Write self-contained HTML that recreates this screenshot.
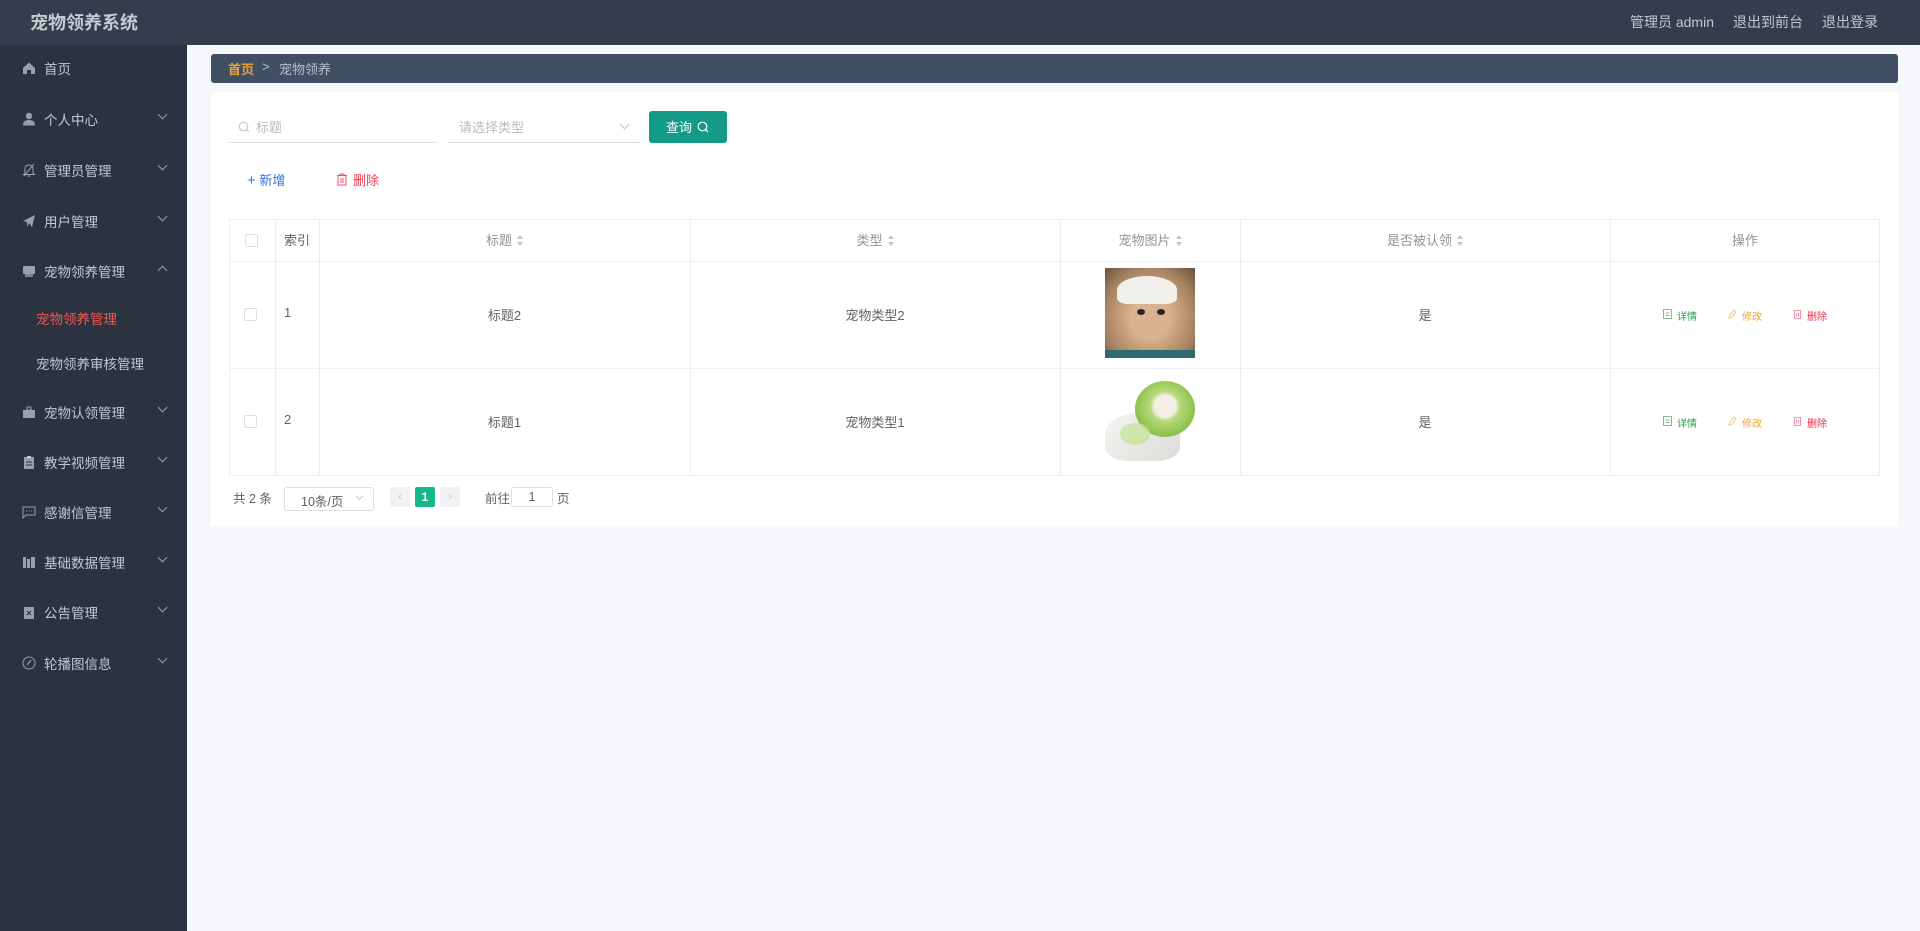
<!DOCTYPE html>
<html><head><meta charset="utf-8"><style>
*{margin:0;padding:0;box-sizing:border-box}
body{width:1920px;height:931px;background:#f5f7fa;font-family:"Liberation Sans","Noto Sans CJK SC",sans-serif;position:relative;overflow:hidden;font-size:13px;color:#606266}
.hd{position:absolute;left:0;top:0;width:1920px;height:45px;background:#343d4c}
.hd .t{position:absolute;left:30px;top:9px;font-size:18px;font-weight:bold;color:#c6cad1}
.hd .r{position:absolute;right:42px;top:12px;font-size:14px;color:#c3c8d0;word-spacing:0}
.hd .r span{margin-left:19px}
.sb{position:absolute;left:0;top:45px;width:187px;height:886px;background:#2b3341}
.it{position:absolute;left:0;width:187px;height:40px;color:#c4c8cf;font-size:13.5px}
.it .ic{position:absolute;left:22px;top:12px;width:14px;height:14px}
.it .tx{position:absolute;left:44px;top:9px}
.it .ar{position:absolute;left:159px;top:11px;width:7px;height:7px;border-right:1px solid #9aa0a8;border-bottom:1px solid #9aa0a8;transform:rotate(45deg)}
.it .ar.up{transform:rotate(-135deg);top:15px}
.sub{position:absolute;left:36px;font-size:13.5px;color:#c4c8cf}
.bc{position:absolute;left:211px;top:54px;width:1687px;height:29px;background:#414f64;border-radius:3px;font-size:13px;color:#b7bec9}
.card{position:absolute;left:211px;top:92px;width:1687px;height:434px;background:#fff}
.abs{position:absolute}
.tb{position:absolute;left:229px;top:219px;width:1651px;height:257px;border:1px solid #ebeef5}
.hl{position:absolute;left:0;width:1649px;height:1px;background:#ebeef5}
.vl{position:absolute;top:0;width:1px;height:255px;background:#ebeef5}
.th{position:absolute;top:10px;color:#909399;font-size:13px;text-align:center}
.td{position:absolute;font-size:13px;color:#606266;text-align:center}
.srt{display:inline-block;width:6px;height:12px;position:relative;top:2px;margin-left:5px}
.srt:before{content:"";position:absolute;left:0;top:0;border:3px solid transparent;border-bottom:4px solid #c0c4cc;border-top:0}
.srt:after{content:"";position:absolute;left:0;top:7px;border:3px solid transparent;border-top:4px solid #c0c4cc;border-bottom:0}
.cb{position:absolute;width:13px;height:13px;border:1px solid #dcdfe6;border-radius:2px;background:#fff}
.op{position:absolute;font-size:10px}
</style></head><body>
<div class="hd"><div class="t">宠物领养系统</div><div class="r"><span>管理员 admin</span><span>退出到前台</span><span>退出登录</span></div></div>
<div class="sb">
<div class="it" style="top:4px"><svg class="ic" viewBox="0 0 14 14"><path d="M1 7L7 1.5 13 7V13H9V9H5V13H1Z" fill="#9aa0a8"/></svg><span class="tx">首页</span></div>
<div class="it" style="top:55px"><svg class="ic" viewBox="0 0 14 14"><circle cx="7" cy="4" r="3.2" fill="#9aa0a8"/><path d="M1 13.5Q1 8 7 8 13 8 13 13.5Z" fill="#9aa0a8"/></svg><span class="tx">个人中心</span><i class="ar"></i></div>
<div class="it" style="top:106px"><svg class="ic" viewBox="0 0 14 14"><path d="M3 10V6Q3 2 7 2 11 2 11 6V10L12.5 11.5H1.5Z M5.5 13H8.5 M2 13L12 1" fill="none" stroke="#9aa0a8" stroke-width="1"/></svg><span class="tx">管理员管理</span><i class="ar"></i></div>
<div class="it" style="top:157px"><svg class="ic" viewBox="0 0 14 14"><path d="M1 7L13 1 10 13 7 9 5 13V8Z" fill="#9aa0a8"/></svg><span class="tx">用户管理</span><i class="ar"></i></div>
<div class="it" style="top:207px"><svg class="ic" viewBox="0 0 14 14"><rect x="1" y="2" width="12" height="8" rx="1" fill="#9aa0a8"/><rect x="3" y="10" width="8" height="3" fill="#7f858e"/></svg><span class="tx">宠物领养管理</span><i class="ar up"></i></div>
<div class="sub" style="top:263px;color:#f2564f">宠物领养管理</div>
<div class="sub" style="top:308px">宠物领养审核管理</div>
<div class="it" style="top:348px"><svg class="ic" viewBox="0 0 14 14"><rect x="5" y="2" width="4" height="3" fill="none" stroke="#9aa0a8"/><rect x="1" y="5" width="12" height="8" fill="#9aa0a8"/></svg><span class="tx">宠物认领管理</span><i class="ar"></i></div>
<div class="it" style="top:398px"><svg class="ic" viewBox="0 0 14 14"><rect x="2" y="2" width="10" height="12" fill="#9aa0a8"/><rect x="5" y="1" width="4" height="2" fill="#c4c8cf"/><path d="M4 7H10M4 10H10" stroke="#2b3341"/></svg><span class="tx">教学视频管理</span><i class="ar"></i></div>
<div class="it" style="top:448px"><svg class="ic" viewBox="0 0 14 14"><path d="M1 2H13V10H4L1 13Z" fill="none" stroke="#9aa0a8"/><path d="M4 6H5M6.5 6H7.5M9 6H10" stroke="#9aa0a8"/></svg><span class="tx">感谢信管理</span><i class="ar"></i></div>
<div class="it" style="top:498px"><svg class="ic" viewBox="0 0 14 14"><rect x="1" y="2" width="3" height="11" fill="#9aa0a8"/><rect x="5" y="4" width="3" height="9" fill="#9aa0a8"/><rect x="9" y="2" width="4" height="11" fill="#9aa0a8"/></svg><span class="tx">基础数据管理</span><i class="ar"></i></div>
<div class="it" style="top:548px"><svg class="ic" viewBox="0 0 14 14"><rect x="2" y="2" width="10" height="12" fill="#9aa0a8"/><path d="M5 6L9 10M9 6L5 10" stroke="#2b3341"/></svg><span class="tx">公告管理</span><i class="ar"></i></div>
<div class="it" style="top:599px"><svg class="ic" viewBox="0 0 14 14"><circle cx="7" cy="7" r="6" fill="none" stroke="#9aa0a8"/><path d="M5 9L9 4" stroke="#9aa0a8" stroke-width="1.3"/></svg><span class="tx">轮播图信息</span><i class="ar"></i></div>
</div>
<div class="bc"><span class="abs" style="left:17px;top:5px;color:#e5a13b;font-weight:bold">首页</span><span class="abs" style="left:51px;top:5px">&gt;</span><span class="abs" style="left:68px;top:5px">宠物领养</span></div>
<div class="card"></div>
<div class="abs" style="left:229px;top:110px;width:208px;height:33px;border-bottom:1px solid #dcdfe6"><svg class="abs" style="left:9px;top:11px" width="12" height="12" viewBox="0 0 12 12"><circle cx="5.5" cy="5.5" r="4.3" fill="none" stroke="#c0c4cc" stroke-width="1.1"/><path d="M8.6 8.6L11 11" stroke="#c0c4cc" stroke-width="1.1"/></svg><span class="abs" style="left:27px;top:7px;color:#b8bbc2">标题</span></div>
<div class="abs" style="left:447px;top:110px;width:193px;height:33px;border-bottom:1px solid #dcdfe6"><span class="abs" style="left:12px;top:7px;color:#b8bbc2">请选择类型</span><i class="abs" style="left:174px;top:11px;width:7px;height:7px;border-right:1px solid #c0c4cc;border-bottom:1px solid #c0c4cc;transform:rotate(45deg)"></i></div>
<div class="abs" style="left:649px;top:111px;width:78px;height:32px;background:#149a89;border-radius:3px;color:#fff;font-size:13px"><span class="abs" style="left:17px;top:6px">查询</span><svg class="abs" style="left:48px;top:10px" width="12" height="12" viewBox="0 0 12 12"><circle cx="5.5" cy="5.5" r="4.3" fill="none" stroke="#fff" stroke-width="1.2"/><path d="M8.6 8.6L11 11" stroke="#fff" stroke-width="1.2"/></svg></div>
<div class="abs" style="left:247px;top:170px;color:#2b74e8"><span style="font-size:15px">+</span> 新增</div>
<svg class="abs" style="left:336px;top:173px" width="12" height="13" viewBox="0 0 12 13"><path d="M1 2.5H11M4 2.5V1H8V2.5M2 2.5V12H10V2.5M5 5V10M7 5V10" fill="none" stroke="#f05259" stroke-width="1"/></svg>
<div class="abs" style="left:353px;top:170px;color:#ef4056">删除</div>
<div class="tb">
<div class="hl" style="top:41px"></div><div class="hl" style="top:148px"></div>
<div class="vl" style="left:45px"></div><div class="vl" style="left:89px"></div><div class="vl" style="left:460px"></div><div class="vl" style="left:830px"></div><div class="vl" style="left:1010px"></div><div class="vl" style="left:1380px"></div>
<div class="cb" style="left:15px;top:14px"></div>
<div class="th" style="left:45px;width:44px;color:#606266">索引</div>
<div class="th" style="left:89px;width:371px">标题<i class="srt"></i></div>
<div class="th" style="left:460px;width:370px">类型<i class="srt"></i></div>
<div class="th" style="left:830px;width:180px">宠物图片<i class="srt"></i></div>
<div class="th" style="left:1010px;width:370px">是否被认领<i class="srt"></i></div>
<div class="th" style="left:1380px;width:270px">操作</div>
<div class="cb" style="left:14px;top:88px"></div>
<div class="td" style="top:85px;left:54px;text-align:left">1</div>
<div class="td" style="left:89px;width:371px;top:85px">标题2</div>
<div class="td" style="left:460px;width:370px;top:85px">宠物类型2</div>
<div class="td" style="left:1010px;width:370px;top:85px">是</div>
<div class="abs" style="left:875px;top:48px;width:90px;height:90px;background:radial-gradient(ellipse at 50% 55%,#d9b290 0 30%,#c9a07c 45%,#a88463 70%,#6a5040 100%)"><div class="abs" style="left:12px;top:8px;width:60px;height:28px;border-radius:50% 50% 20% 20%;background:#f2f0ec"></div><div class="abs" style="left:0;top:82px;width:90px;height:8px;background:#2f6b6e"></div><div class="abs" style="left:32px;top:41px;width:8px;height:6px;border-radius:50%;background:#2a2420"></div><div class="abs" style="left:52px;top:41px;width:8px;height:6px;border-radius:50%;background:#2a2420"></div></div>
<div class="cb" style="left:14px;top:195px"></div>
<div class="td" style="left:54px;top:192px;text-align:left">2</div>
<div class="td" style="left:89px;width:371px;top:192px">标题1</div>
<div class="td" style="left:460px;width:370px;top:192px">宠物类型1</div>
<div class="td" style="left:1010px;width:370px;top:192px">是</div>
<div class="abs" style="left:875px;top:155px;width:90px;height:90px"><div class="abs" style="left:0;top:38px;width:75px;height:48px;border-radius:45% 45% 30% 30%;background:linear-gradient(135deg,#f4f4f2,#dcdcd8)"></div><div class="abs" style="left:30px;top:6px;width:60px;height:56px;border-radius:50%;background:radial-gradient(circle at 50% 45%,#f3efe6 0 25%,#b6d97a 35%,#8cc04a 70%,#a9d36a 100%)"></div><div class="abs" style="left:15px;top:48px;width:30px;height:22px;border-radius:50%;background:#c9e39a;opacity:.8"></div></div>
<svg class="abs" style="left:1433px;top:89px" width="9" height="10" viewBox="0 0 9 10"><rect x=".5" y=".5" width="8" height="9" fill="none" stroke="#7fbf8f"/><path d="M2.5 4H6.5M2.5 6.5H6.5" stroke="#7fbf8f"/></svg><span class="op" style="left:1447px;top:88px;color:#22a04a">详情</span>
<svg class="abs" style="left:1498px;top:89px" width="9" height="10" viewBox="0 0 9 10"><path d="M1 9L2 6 6 1 8 3 4 8Z" fill="none" stroke="#f4c27a"/></svg><span class="op" style="left:1512px;top:88px;color:#f4a51c">修改</span>
<svg class="abs" style="left:1563px;top:89px" width="9" height="10" viewBox="0 0 9 10"><path d="M.5 1.5H8.5M1.5 1.5V9.5H7.5V1.5M3.5 4V7.5M5.5 4V7.5" fill="none" stroke="#e99aa8"/></svg><span class="op" style="left:1577px;top:88px;color:#ee2d46">删除</span>
<svg class="abs" style="left:1433px;top:196px" width="9" height="10" viewBox="0 0 9 10"><rect x=".5" y=".5" width="8" height="9" fill="none" stroke="#7fbf8f"/><path d="M2.5 4H6.5M2.5 6.5H6.5" stroke="#7fbf8f"/></svg><span class="op" style="left:1447px;top:195px;color:#22a04a">详情</span>
<svg class="abs" style="left:1498px;top:196px" width="9" height="10" viewBox="0 0 9 10"><path d="M1 9L2 6 6 1 8 3 4 8Z" fill="none" stroke="#f4c27a"/></svg><span class="op" style="left:1512px;top:195px;color:#f4a51c">修改</span>
<svg class="abs" style="left:1563px;top:196px" width="9" height="10" viewBox="0 0 9 10"><path d="M.5 1.5H8.5M1.5 1.5V9.5H7.5V1.5M3.5 4V7.5M5.5 4V7.5" fill="none" stroke="#e99aa8"/></svg><span class="op" style="left:1577px;top:195px;color:#ee2d46">删除</span>
</div>
<div class="abs" style="left:233px;top:488px;font-size:12.5px">共 2 条</div>
<div class="abs" style="left:284px;top:487px;width:90px;height:24px;border:1px solid #dcdfe6;border-radius:3px;font-size:12.5px"><span class="abs" style="left:16px;top:3px">10条/页</span><i class="abs" style="left:72px;top:6px;width:5px;height:5px;border-right:1px solid #c0c4cc;border-bottom:1px solid #c0c4cc;transform:rotate(45deg)"></i></div>
<div class="abs" style="left:390px;top:487px;width:20px;height:20px;background:#f0f2f5;color:#c0c4cc;text-align:center;line-height:19px;font-size:12px">‹</div>
<div class="abs" style="left:415px;top:487px;width:20px;height:20px;background:#14b88a;color:#fff;text-align:center;line-height:20px;font-size:12px;font-weight:bold;border-radius:2px">1</div>
<div class="abs" style="left:440px;top:487px;width:20px;height:20px;background:#f0f2f5;color:#c0c4cc;text-align:center;line-height:19px;font-size:12px">›</div>
<div class="abs" style="left:485px;top:488px;font-size:12.5px">前往</div>
<div class="abs" style="left:511px;top:487px;width:42px;height:20px;border:1px solid #dcdfe6;border-radius:3px;text-align:center;font-size:12.5px;line-height:18px">1</div>
<div class="abs" style="left:557px;top:488px;font-size:12.5px">页</div>
</body></html>
